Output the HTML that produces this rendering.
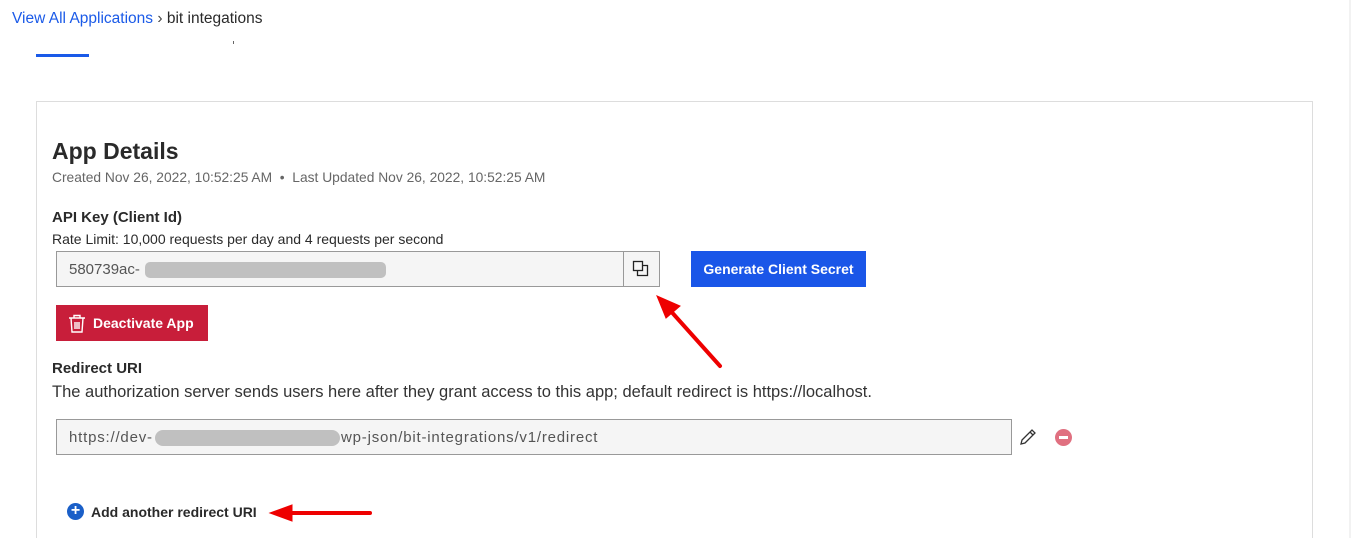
<!DOCTYPE html>
<html style="overflow:hidden;height:538px"><head><meta charset="utf-8"><style>
html,body{overflow:hidden}
body{margin:0;width:1351px;height:538px;overflow:hidden;background:#fff;font-family:"Liberation Sans",sans-serif;color:#2a2a2a;position:relative}
.a{position:absolute;white-space:nowrap}
</style></head><body>
<div class="a" style="left:12px;top:10px;font-size:15.5px;"><span style="color:#1a5ae8">View All Applications</span> <span style="color:#444">›</span> <span style="color:#2a2a2a">bit integations</span></div>
<div class="a" style="left:36px;top:54px;width:53px;height:3px;background:#1a5ae8"></div>
<div class="a" style="left:233px;top:41px;width:1px;height:3px;background:#666"></div>
<div class="a" style="left:36px;top:101px;width:1275px;height:440px;border:1px solid #ddd;border-bottom:none"></div>
<div class="a" style="left:1349px;top:0;width:2px;height:538px;background:#f2f2f2"></div>

<div class="a" style="left:52px;top:138px;font-size:23px;font-weight:bold;color:#2a2a2a">App Details</div>
<div class="a" style="left:52px;top:170px;font-size:13.8px;color:#666">Created Nov 26, 2022, 10:52:25 AM &nbsp;•&nbsp; Last Updated Nov 26, 2022, 10:52:25 AM</div>
<div class="a" style="left:52px;top:209px;font-size:15px;font-weight:bold">API Key (Client Id)</div>
<div class="a" style="left:52px;top:231px;font-size:14px;">Rate Limit: 10,000 requests per day and 4 requests per second</div>

<div class="a" style="left:56px;top:251px;width:602px;height:34px;border:1px solid #999;background:#f5f5f5"></div>
<div class="a" style="left:623px;top:252px;width:1px;height:34px;background:#999"></div>
<div class="a" style="left:69px;top:261px;font-size:15px;color:#555">580739ac-</div>
<div class="a" style="left:145px;top:262px;width:241px;height:16px;border-radius:5px;background:#c0c0c0"></div>
<svg class="a" style="left:632px;top:260px" width="18" height="18" viewBox="0 0 18 18"><rect x="1.5" y="1.5" width="9" height="9" fill="none" stroke="#222" stroke-width="1.3"/><path d="M10.5 5.5H15.5V15.5H5.5V10.5" fill="none" stroke="#222" stroke-width="1.3"/></svg>
<div class="a" style="left:691px;top:251px;width:175px;height:36px;background:#1a56e8;color:#fff;font-size:14px;font-weight:bold;line-height:36px;text-align:center">Generate Client Secret</div>

<div class="a" style="left:56px;top:305px;width:152px;height:36px;background:#c81e3a;color:#fff;font-size:14px;font-weight:bold;line-height:36px"><svg style="position:absolute;left:12px;top:9px" width="18" height="19" viewBox="0 0 18 19"><path d="M1 4H17M6 4V1.5H12V4M3 4L4 18H14L15 4M7 8V15M9 8V15M11 8V15" fill="none" stroke="#fff" stroke-width="1.4"/></svg><span style="position:absolute;left:37px">Deactivate App</span></div>

<div class="a" style="left:52px;top:360px;font-size:15px;font-weight:bold">Redirect URI</div>
<div class="a" style="left:52px;top:383px;font-size:16.5px;color:#333">The authorization server sends users here after they grant access to this app; default redirect is https://localhost.</div>

<div class="a" style="left:56px;top:419px;width:954px;height:34px;border:1px solid #999;background:#f5f5f5"></div>
<div class="a" style="left:69px;top:429px;font-size:15px;color:#555;letter-spacing:0.8px">https://dev-</div>
<div class="a" style="left:155px;top:430px;width:185px;height:16px;border-radius:8px;background:#c0c0c0"></div>
<div class="a" style="left:341px;top:429px;font-size:15px;color:#555;letter-spacing:0.8px">wp-json/bit-integrations/v1/redirect</div>
<svg class="a" style="left:1019px;top:428px" width="18" height="18" viewBox="0 0 18 18"><path d="M2 16L3 12L13 2L16 5L6 15Z M11 4L14 7" fill="none" stroke="#333" stroke-width="1.3"/></svg>
<div class="a" style="left:1055px;top:429px;width:17px;height:17px;border-radius:50%;background:#e07080"></div>
<div class="a" style="left:1059px;top:436px;width:9px;height:3px;background:#fff"></div>

<div class="a" style="left:67px;top:503px;width:17px;height:17px;border-radius:50%;background:#1a5fc8;color:#fff;font-size:16px;line-height:16px;text-align:center;font-weight:bold">+</div>
<div class="a" style="left:91px;top:504px;font-size:14px;font-weight:bold">Add another redirect URI</div>

<svg class="a" style="left:0;top:0" width="1351" height="538"><g stroke="#ee0000" stroke-width="4" stroke-linecap="round" fill="#ee0000"><line x1="720" y1="366" x2="668" y2="308"/><polygon points="657,296 680,306 666,318" stroke-width="1"/><line x1="370" y1="513" x2="290" y2="513"/><polygon points="270,513 292,505 292,521" stroke-width="1"/></g></svg>
</body></html>
